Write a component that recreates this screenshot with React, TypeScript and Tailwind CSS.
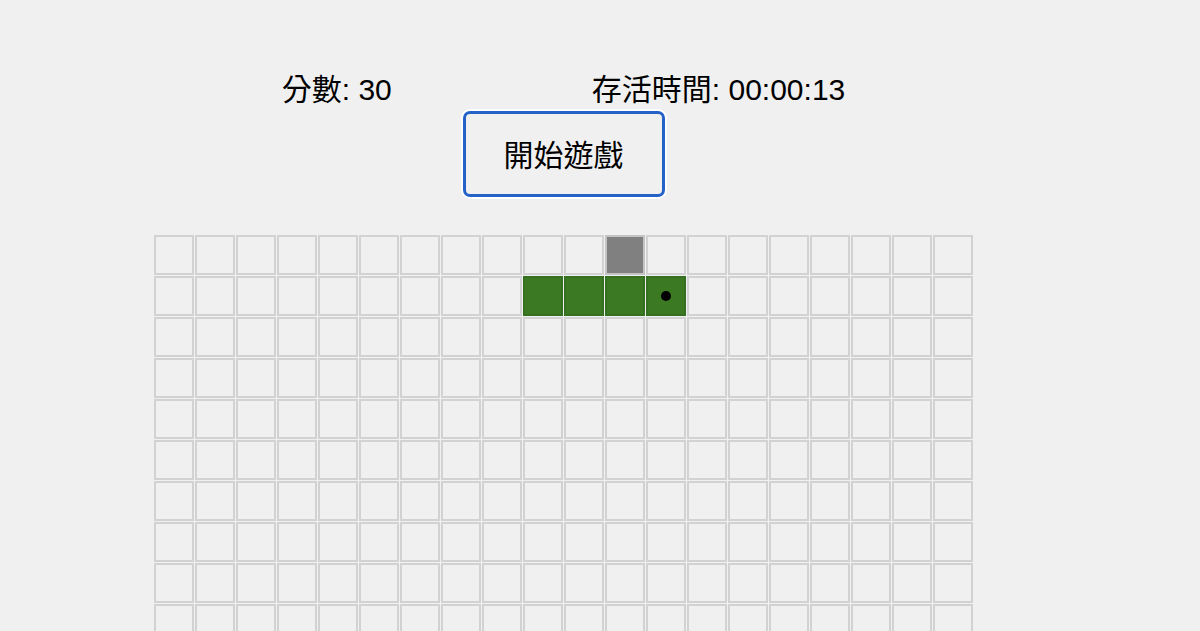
import { useEffect, useState } from 'react';

const COLS = 20;
const ROWS = 20;

type Point = { x: number; y: number };

const initialSnake: Point[] = [
  { x: 12, y: 1 },
  { x: 11, y: 1 },
  { x: 10, y: 1 },
  { x: 9, y: 1 },
];

const formatTime = (secs: number) => {
  const h = String(Math.floor(secs / 3600)).padStart(2, '0');
  const m = String(Math.floor((secs % 3600) / 60)).padStart(2, '0');
  const s = String(secs % 60).padStart(2, '0');
  return `${h}:${m}:${s}`;
};

export default function App() {
  const [snake] = useState<Point[]>(initialSnake);
  const [food] = useState<Point>({ x: 11, y: 0 });
  const [score] = useState(30);
  const [seconds, setSeconds] = useState(13);
  const [running, setRunning] = useState(false);

  useEffect(() => {
    if (!running) return;
    const t = setInterval(() => setSeconds((s) => s + 1), 1000);
    return () => clearInterval(t);
  }, [running]);

  const cellClass = (x: number, y: number) => {
    if (snake.some((p) => p.x === x && p.y === y)) return 'bg-[#3b7a23] border-[#357020]';
    if (food.x === x && food.y === y) return 'bg-[#808080] border-[#c4c4c4]';
    return 'bg-[#f0f0f0] border-[#d2d2d2]';
  };

  return (
    <div
      className="min-h-screen bg-[#f0f0f0] text-black overflow-hidden"
      style={{ fontFamily: '"Liberation Sans", "Noto Sans CJK TC", sans-serif' }}
    >
      <div className="w-[1127px] flex flex-col items-center pt-[71px]">
        <div className="flex gap-[200px] h-[38px] leading-[38px] text-[30px]">
          <span>分數: {score}</span>
          <span>存活時間: {formatTime(seconds)}</span>
        </div>

        <button
          onClick={() => setRunning(!running)}
          className="mt-[2px] w-[202px] h-[86px] pt-[3px] rounded-[7px] border-[3px] border-[#2462c8] bg-[#f0f0f0] ring-2 ring-white text-[30px]"
        >
          開始遊戲
        </button>

        <div className="mt-[38px] grid grid-cols-[repeat(20,40.05px)] gap-[1px]">
          {Array.from({ length: ROWS * COLS }, (_, i) => {
            const x = i % COLS;
            const y = Math.floor(i / COLS);
            const isHead = snake[0].x === x && snake[0].y === y;
            return (
              <div
                key={i}
                className={`h-10 border-2 flex items-center justify-center ${cellClass(x, y)}`}
              >
                {isHead && <div className="w-[10px] h-[10px] rounded-full bg-black" />}
              </div>
            );
          })}
        </div>
      </div>
    </div>
  );
}
